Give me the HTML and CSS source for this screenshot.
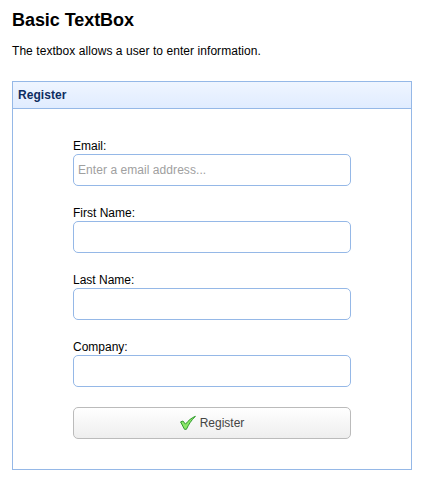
FILE: index.html
```html
<!DOCTYPE html>
<html lang="en">
<head>
  <meta charset="UTF-8">
  <title>Basic TextBox</title>
  <link rel="stylesheet" href="styles.css">
</head>
<body>
  <h2>Basic TextBox</h2>
  <p>The textbox allows a user to enter information.</p>
  <div class="panel">
    <div class="panel-header">Register</div>
    <form class="panel-body">
      <div class="field">
        <label for="email">Email:</label>
        <input type="text" id="email" placeholder="Enter a email address...">
      </div>
      <div class="field">
        <label for="firstName">First Name:</label>
        <input type="text" id="firstName">
      </div>
      <div class="field">
        <label for="lastName">Last Name:</label>
        <input type="text" id="lastName">
      </div>
      <div class="field">
        <label for="company">Company:</label>
        <input type="text" id="company">
      </div>
      <button type="button" class="btn">
        <svg class="icon-ok" width="16" height="16" viewBox="0 0 16 16">
          <path d="M0.6 6.9 L2.9 6 L5.5 9.2 C8.3 5.6 11.3 2.9 15.4 1.3 C11.3 5.2 8.6 9.5 6.4 14.3 L4.5 14.3 Z" fill="#8be868" stroke="#2f9a2c" stroke-width="1" stroke-linejoin="round"/>
        </svg>
        <span>Register</span>
      </button>
    </form>
  </div>
</body>
</html>
```
FILE: styles.css
```css
* {
  box-sizing: border-box;
}
body {
  margin: 0;
  padding: 10px 10px 10px 12px;
  background: #fff;
  color: #000;
  font-family: "Liberation Sans", Arial, sans-serif;
  font-size: 12px;
}
h2 {
  margin: 0 0 14px;
  font-size: 18px;
  line-height: 20px;
  letter-spacing: -0.06px;
}
p {
  margin: 0 0 23px;
  line-height: 14px;
  letter-spacing: 0.06px;
}
.panel {
  width: 400px;
  height: 389px;
  border: 1px solid #95b8e7;
}
.panel-header {
  height: 27px;
  padding: 0 5px;
  line-height: 27px;
  font-weight: bold;
  letter-spacing: 0.06px;
  color: #0e2d5f;
  background: linear-gradient(to bottom, #eff5ff 0, #e0ecff 100%);
  border-bottom: 1px solid #95b8e7;
}
.panel-body {
  padding: 30px 60px;
}
.field {
  margin-bottom: 20px;
}
label {
  display: block;
  height: 15px;
  line-height: 14px;
}
input {
  display: block;
  width: 278px;
  height: 32px;
  padding: 0 4px;
  border: 1px solid #95b8e7;
  border-radius: 5px;
  background: #fff;
  font: inherit;
}
input::placeholder {
  color: #a0a0a0;
  letter-spacing: 0.06px;
}
.btn {
  display: flex;
  align-items: center;
  justify-content: center;
  gap: 4px;
  width: 278px;
  height: 32px;
  padding: 0;
  border: 1px solid #bbb;
  border-radius: 5px;
  background: linear-gradient(to bottom, #fff 0, #eee 100%);
  color: #444;
  font: inherit;
}
```
